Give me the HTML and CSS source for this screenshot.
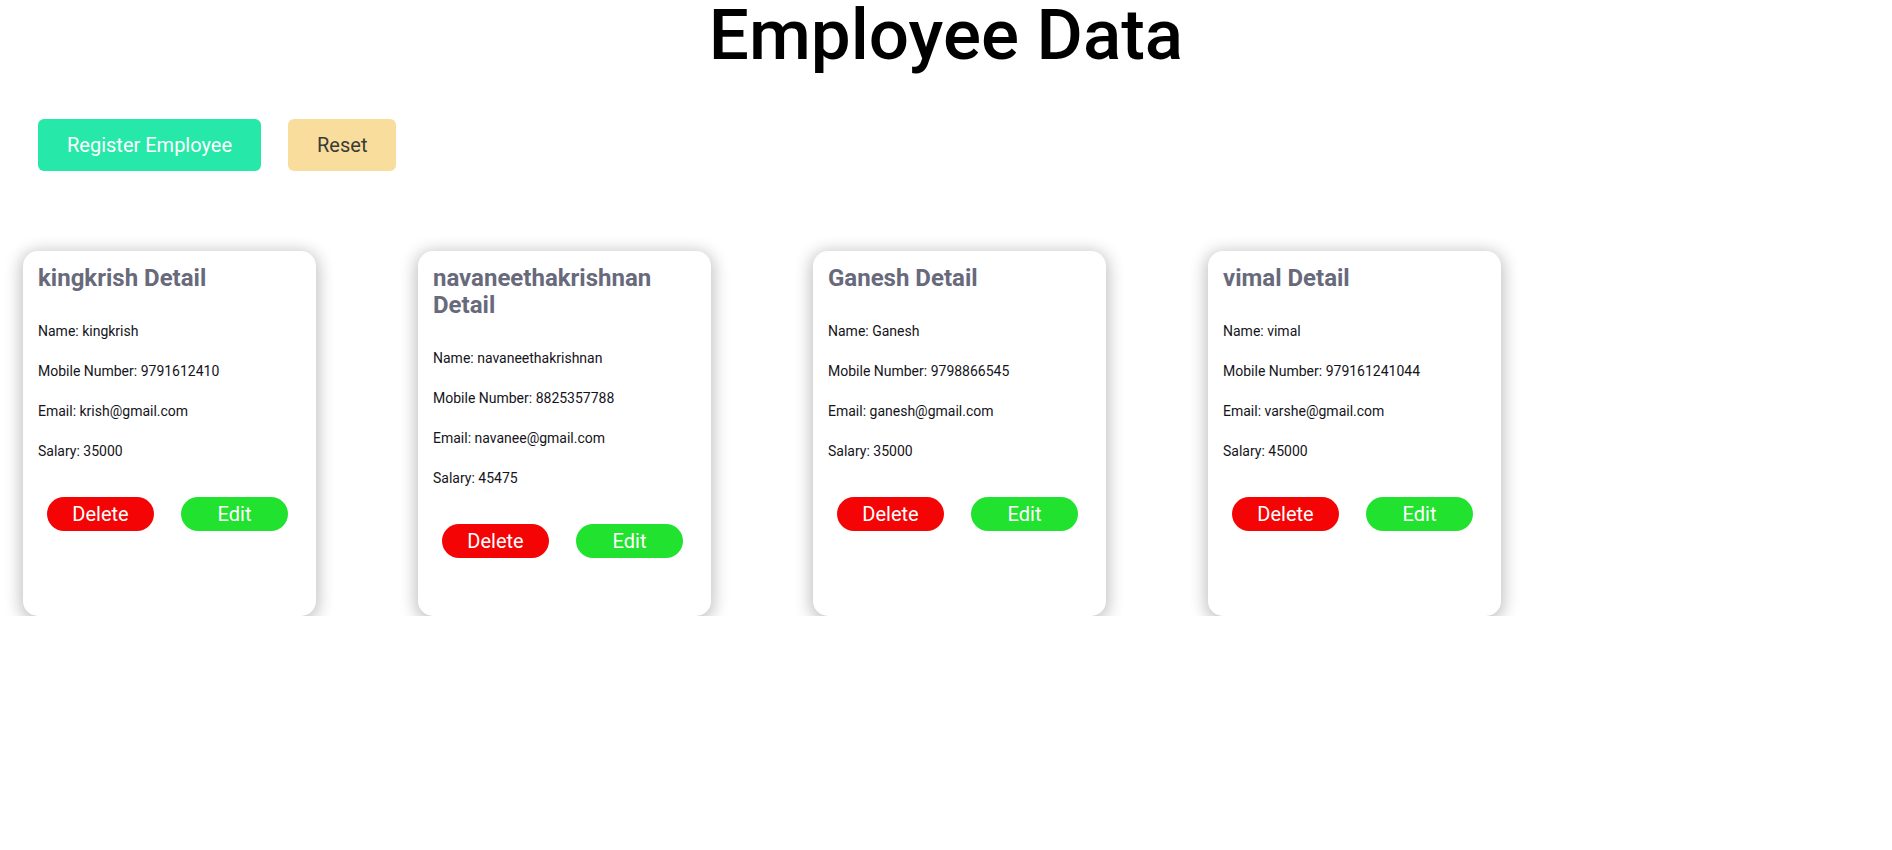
FILE: index.html
```html
<!DOCTYPE html>
<html lang="en">
<head>
<meta charset="utf-8">
<title>Employee Data</title>
<link rel="stylesheet" href="styles.css">
</head>
<body>
<h1 class="page-title">Employee Data</h1>
<div class="toolbar">
  <button class="btn btn-register">Register Employee</button>
  <button class="btn btn-reset">Reset</button>
</div>
<div class="cards">
  <div class="card">
    <h2 class="card-title">kingkrish Detail</h2>
    <div class="card-body">
      <p>Name: kingkrish</p>
      <p>Mobile Number: 9791612410</p>
      <p>Email: krish@gmail.com</p>
      <p>Salary: 35000</p>
    </div>
    <div class="card-actions">
      <button class="pill pill-delete">Delete</button>
      <button class="pill pill-edit">Edit</button>
    </div>
  </div>
  <div class="card">
    <h2 class="card-title">navaneethakrishnan Detail</h2>
    <div class="card-body">
      <p>Name: navaneethakrishnan</p>
      <p>Mobile Number: 8825357788</p>
      <p>Email: navanee@gmail.com</p>
      <p>Salary: 45475</p>
    </div>
    <div class="card-actions">
      <button class="pill pill-delete">Delete</button>
      <button class="pill pill-edit">Edit</button>
    </div>
  </div>
  <div class="card">
    <h2 class="card-title">Ganesh Detail</h2>
    <div class="card-body">
      <p>Name: Ganesh</p>
      <p>Mobile Number: 9798866545</p>
      <p>Email: ganesh@gmail.com</p>
      <p>Salary: 35000</p>
    </div>
    <div class="card-actions">
      <button class="pill pill-delete">Delete</button>
      <button class="pill pill-edit">Edit</button>
    </div>
  </div>
  <div class="card">
    <h2 class="card-title">vimal Detail</h2>
    <div class="card-body">
      <p>Name: vimal</p>
      <p>Mobile Number: 979161241044</p>
      <p>Email: varshe@gmail.com</p>
      <p>Salary: 45000</p>
    </div>
    <div class="card-actions">
      <button class="pill pill-delete">Delete</button>
      <button class="pill pill-edit">Edit</button>
    </div>
  </div>
</div>
</body>
</html>
```

FILE: styles.css
```css
* { box-sizing: border-box; }

body {
  margin: 0;
  background: #ffffff;
  font-family: Roboto, "Open Sans", "Liberation Sans", sans-serif;
  color: #111111;
}

.page-title {
  margin: 0;
  padding-top: 4px;
  text-align: center;
  font-size: 71px;
  line-height: 62px;
  font-weight: 500;
  color: #000000;
}

.toolbar {
  display: flex;
  gap: 27px;
  margin-top: 53px;
  padding-left: 38px;
}

.btn {
  height: 52px;
  padding: 0 29px;
  border: none;
  border-radius: 6px;
  font-family: inherit;
  font-size: 20px;
  cursor: pointer;
}

.btn-register {
  background: #26e8a8;
  color: #ffffff;
}

.btn-reset {
  background: #f9dd9c;
  color: #3a3a3a;
}

.cards {
  display: flex;
  gap: 102px;
  margin-top: 80px;
  padding-left: 23px;
}

.card {
  width: 293px;
  height: 365px;
  padding: 14px 15px 0 15px;
  background: #ffffff;
  border-radius: 15px;
  box-shadow: 0 3px 16px 3px rgba(0, 0, 0, 0.24);
}

.card-title {
  margin: 0;
  font-size: 24px;
  line-height: 27px;
  font-weight: 700;
  color: #686a7c;
}

.card-body {
  display: flex;
  flex-direction: column;
  gap: 20px;
  margin-top: 29px;
}

.card-body p {
  margin: 0;
  font-size: 14px;
  line-height: 20px;
  color: #141420;
}

.card-actions {
  display: flex;
  gap: 27px;
  margin-top: 36px;
  padding-left: 9px;
}

.pill {
  width: 107px;
  height: 34px;
  padding: 0;
  border: none;
  border-radius: 17px;
  font-family: inherit;
  font-size: 20px;
  color: #ffffff;
  cursor: pointer;
}

.pill-delete { background: #f40404; }
.pill-edit { background: #20e22f; }
```
